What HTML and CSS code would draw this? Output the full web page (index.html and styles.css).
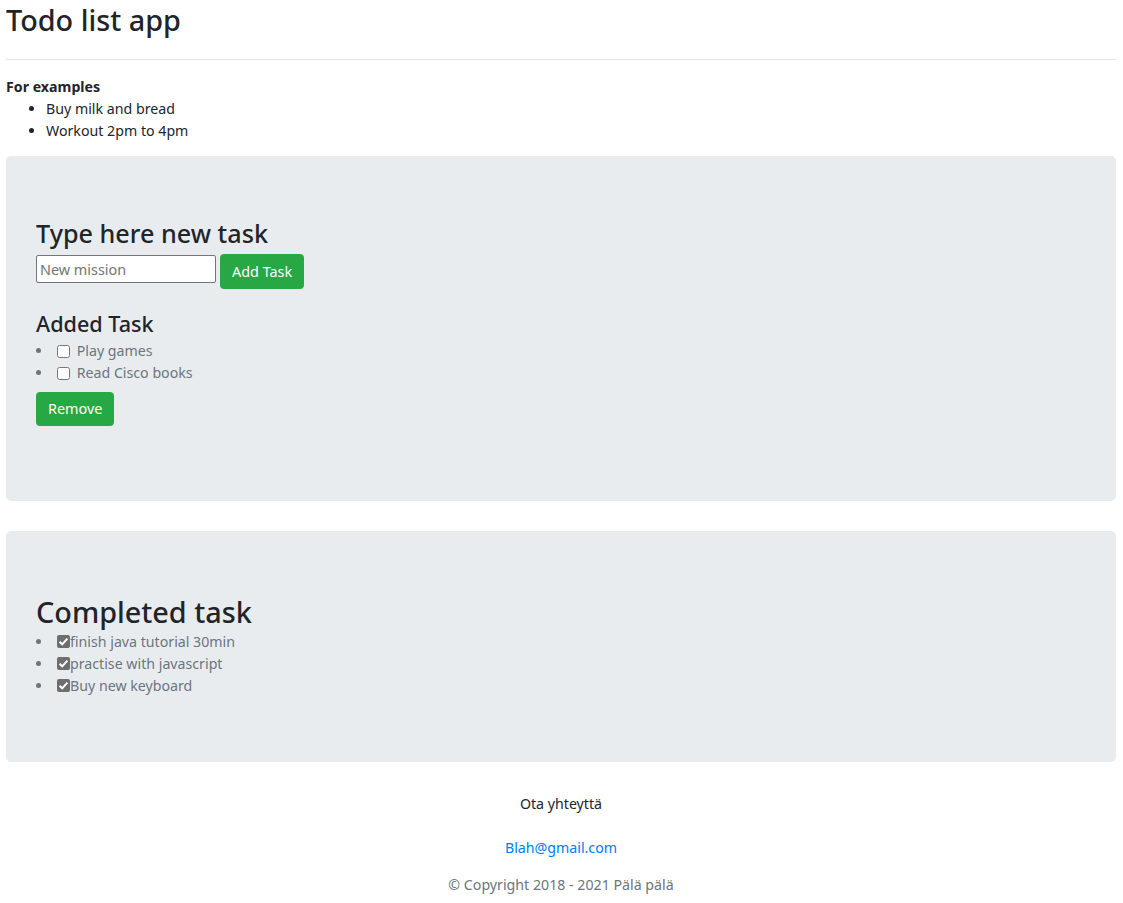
FILE: index.html
```html
<!DOCTYPE html>
<html>
<head>
<meta charset="utf-8">
<title>Todo list app</title>
<link rel="stylesheet" href="styles.css">
</head>
<body>
<header class="top">
  <h1 class="title">Todo list app</h1>
  <hr class="rule">
  <p class="examples-label">For examples</p>
  <ul class="examples">
    <li>Buy milk and bread</li>
    <li>Workout 2pm to 4pm</li>
  </ul>
</header>

<section class="jumbo jumbo-new">
  <h3 class="h-new">Type here new task</h3>
  <form class="add-form">
    <input class="mission" type="text" placeholder="New mission">
    <button class="btn btn-add" type="button">Add Task</button>
  </form>
  <h4 class="h-added">Added Task</h4>
  <ul class="tasks">
    <li><input class="chk" type="checkbox"> Play games</li>
    <li><input class="chk" type="checkbox"> Read Cisco books</li>
  </ul>
  <button class="btn btn-remove" type="button">Remove</button>
</section>

<section class="jumbo jumbo-done">
  <h2 class="h-done">Completed task</h2>
  <ul class="tasks">
    <li><input class="chk chk-done" type="checkbox" checked disabled>finish java tutorial 30min</li>
    <li><input class="chk chk-done" type="checkbox" checked disabled>practise with javascript</li>
    <li><input class="chk chk-done" type="checkbox" checked disabled>Buy new keyboard</li>
  </ul>
</section>

<footer class="footer">
  <p class="contact">Ota yhteyttä</p>
  <a class="mail" href="#">Blah@gmail.com</a>
  <p class="copy">© Copyright 2018 - 2021 Pälä pälä</p>
</footer>
</body>
</html>
```

FILE: styles.css
```css
html, body {
  margin: 0;
  padding: 0;
}
body {
  padding: 0 7px 0 6px;
  font-family: "Noto Sans", "Open Sans", sans-serif;
  font-size: 14.2px;
  line-height: 22px;
  color: #212529;
  background: #fff;
}
.title {
  margin: 0;
  padding-top: 2px;
  font-size: 28.8px;
  font-weight: 500;
  line-height: 36px;
}
.rule {
  margin: 21px 0 16px;
  border: 0;
  border-top: 1px solid #e5e5e5;
}
.examples-label {
  margin: 0;
  font-weight: 700;
}
.examples {
  margin: 0 0 14px;
  padding-left: 40px;
}
.jumbo {
  background: #e9ecef;
  border-radius: 5px;
  padding: 62px 30px 58px;
}
.jumbo-new {
  padding-bottom: 75px;
}
.jumbo-done {
  margin-top: 30px;
  padding-top: 64px;
  padding-bottom: 65px;
}
.h-new {
  margin: 0 0 7px;
  font-size: 25.2px;
  font-weight: 500;
  line-height: 30px;
}
.add-form {
  display: flex;
  align-items: flex-start;
  gap: 4px;
  margin: 0 0 22px;
}
.mission {
  box-sizing: border-box;
  width: 180px;
  height: 28px;
  margin: 0;
  padding: 1px 3px;
  border: 1px solid #767676;
  border-radius: 2px;
  font-family: inherit;
  font-size: 14.4px;
  background: #fff;
}
.mission::placeholder {
  color: #757575;
}
.btn {
  display: inline-block;
  padding: 5.4px 11px;
  border: 1px solid #28a745;
  border-radius: 3.6px;
  background: #28a745;
  color: #fff;
  font-family: inherit;
  font-size: 14.4px;
  line-height: 21.6px;
  cursor: pointer;
}
.btn-add {
  margin-top: -1px;
  height: 35px;
}
.h-added {
  margin: 0 0 3px;
  font-size: 21.6px;
  font-weight: 500;
  line-height: 26px;
}
.tasks {
  margin: 0 0 8px;
  padding-left: 17px;
  color: #6c757d;
}
.chk {
  width: 13px;
  height: 13px;
  margin: 3px 3px 3px 4px;
  vertical-align: -2px;
}
.chk-done {
  -webkit-appearance: none;
  appearance: none;
  box-sizing: border-box;
  margin: 0 0 0 4px;
  border-radius: 2px;
  vertical-align: -1px;
  background: #6e6e6e url("data:image/svg+xml,%3Csvg xmlns='http://www.w3.org/2000/svg' viewBox='0 0 13 13'%3E%3Cpath d='M2.6 6.8 5.2 9.3 10.4 3.6' fill='none' stroke='%23fff' stroke-width='2'/%3E%3C/svg%3E") no-repeat center / 13px 13px;
}
.h-done {
  margin: 0 0 2px;
  font-size: 28.8px;
  font-weight: 500;
  line-height: 34px;
}
.jumbo-done .tasks {
  margin: 0;
}
.footer {
  display: flex;
  flex-direction: column;
  align-items: center;
  padding: 31px 0 8px;
}
.contact {
  margin: 0 0 22px;
}
.mail {
  color: #007bff;
  text-decoration: none;
}
.copy {
  margin: 15px 0 0;
  color: #6c757d;
}
```
